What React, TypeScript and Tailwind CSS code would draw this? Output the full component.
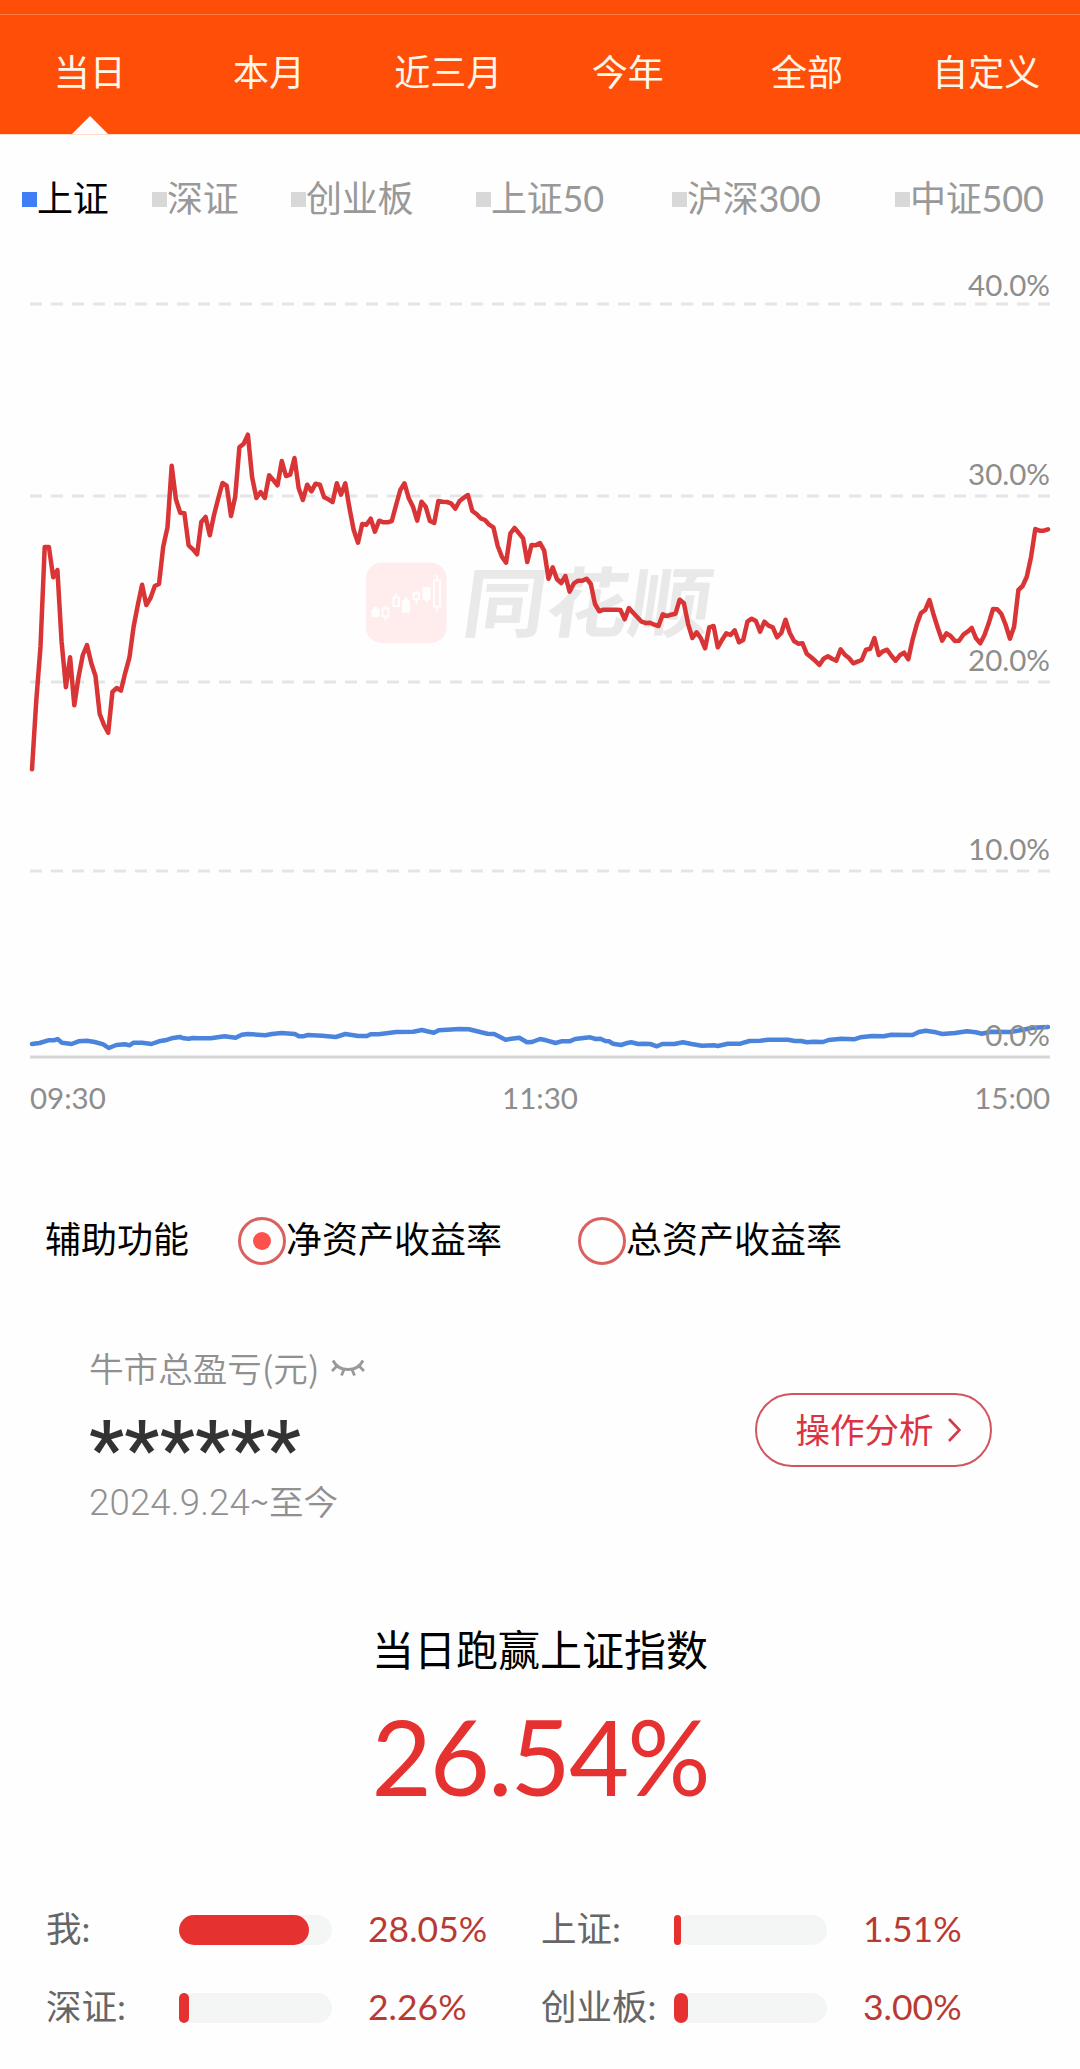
import clsx from 'clsx';

const TABS = ['当日', '本月', '近三月', '今年', '全部', '自定义'];

const INDEXES = [
  { name: '上证', width: 'w-[130px]' },
  { name: '深证', width: 'w-[139px]' },
  { name: '创业板', width: 'w-[185px]' },
  { name: '上证50', width: 'w-[196px]' },
  { name: '沪深300', width: 'w-[223px]' },
  { name: '中证500', width: 'w-[160px]' },
];

const GRID = [
  { label: '40.0%', y: 304, textY: 296 },
  { label: '30.0%', y: 496, textY: 485 },
  { label: '20.0%', y: 682, textY: 671 },
  { label: '10.0%', y: 871, textY: 860 },
];

// one value per trading minute
const MINE = [
  769.3, 701.7, 646.7, 547, 547, 577.3, 570, 641.7, 687.3, 657.3, 705.3, 676.7, 655, 645, 663.3, 676, 714, 725, 732.7,
  692, 688, 690.7, 673.3, 657.7, 626.7, 605, 584.7, 605, 598, 586, 584, 546.7, 527.3, 465.7, 499.3, 512.7, 513.3, 545.3,
  549.3, 554.3, 522, 517, 535.3, 515, 498.3, 483, 485.7, 516, 496.7, 447.3, 443.7, 434.7, 477.3, 498, 492, 498, 475.3,
  480, 485.3, 461, 476, 474.7, 458, 488.3, 500, 484.7, 491.3, 483.7, 484.7, 497.3, 499.3, 502, 483.3, 494.7, 483.3,
  508.3, 530, 542.7, 524, 524.7, 518.7, 531.7, 520.7, 522.3, 522.3, 521, 505, 490, 483.3, 498.3, 506.7, 520.7, 501.7,
  506.7, 521, 523, 501, 501.7, 502, 503.3, 508.7, 501, 497.7, 495, 511, 514, 518.3, 520, 524.7, 527.3, 546, 556.7,
  562.7, 533.3, 528, 533, 538.3, 562, 545, 545.3, 543, 550.7, 578.7, 567.3, 579, 583, 576, 591.7, 583.3, 580.7, 580.7,
  578.7, 584, 604, 611.3, 609.7, 609.7, 609.7, 609.7, 610, 619.3, 608, 612.7, 617.3, 621.7, 623, 622.7, 624.7, 626,
  614.3, 616, 614.7, 613.7, 599.7, 603.3, 624.3, 638, 632.3, 638.3, 648.3, 627.3, 626, 647.3, 640, 633.3, 635, 630.3,
  642.3, 640, 621.7, 618.7, 621, 631.7, 621.7, 625.7, 627.3, 637.3, 633, 619.7, 633, 641, 643.7, 643.3, 653.7, 657,
  660.7, 665, 658.7, 656.3, 658.7, 660.7, 649.3, 654.7, 658, 663.3, 661.7, 660, 649.7, 648.7, 638, 655, 651.3, 649.7,
  655.7, 660.7, 655.3, 652.7, 659.3, 640, 624.3, 613, 610, 600, 615, 628.3, 640.7, 633.3, 636, 641, 640.7, 634.7,
  631.7, 628, 638.3, 643.3, 635, 623.3, 609, 609.3, 614, 625, 638.7, 626.7, 590, 586, 576.7, 556.7, 529, 530.7, 530.7,
  529.3,
];

const SHANGHAI =
  '32,1044 39.6,1043 48.2,1040.3 54,1040.3 57.5,1039 62,1042.7 71.6,1044 78.5,1041.3 86.8,1040.7 94.7,1042 103.3,1044.3 ' +
  '108.8,1048 116.4,1045 124.7,1044.3 129.5,1045.3 133.6,1042.7 141.9,1042.7 151.5,1044 159,1041.3 165.3,1040.3 ' +
  '171.5,1038.3 179.8,1037 183.9,1038.3 188.7,1038.7 192.9,1038 199.7,1038.3 210.8,1038.3 224.5,1036.3 235.6,1037.7 ' +
  '241.8,1034.7 248,1034 265.2,1035.3 272,1034 281.4,1033 294.8,1034 299,1036.3 303,1036.3 307.9,1035 322,1035.7 ' +
  '335.8,1037 345.4,1034 358.2,1036 367,1036 370.6,1034.3 378.8,1034.3 396,1032 413.3,1031.7 421.9,1030 427,1031.3 ' +
  '433.9,1032.7 438.7,1030.3 459.8,1029 469,1029.3 477,1031.3 487.3,1033.7 494.2,1034 505.6,1039.7 511.4,1038.7 ' +
  '519.3,1037.7 527,1042.3 532,1042 540,1039 546.2,1040.3 555.5,1043 561.4,1041.3 569.6,1041.3 575.1,1039 590,1037.3 ' +
  '595.8,1039 600.3,1038.7 605.4,1041 608.9,1041.3 613,1043.7 621,1045 626,1043.3 631.3,1042.3 638.2,1044 643.3,1043.7 ' +
  '650.2,1044 657,1046.3 662.3,1044 674.3,1044 683,1042.3 691.5,1044 701.9,1045.7 714,1045.3 717.7,1046 727.7,1043.7 ' +
  '740.4,1043.7 749.4,1041 760.4,1040.7 768,1039.7 788,1039.7 794.8,1041 801,1041 806.9,1042.3 813.8,1041.7 823,1042 ' +
  '828.6,1040 841.3,1038.7 854,1039.3 860.3,1037.3 872.3,1036 883.7,1036.3 891.3,1034.7 912.6,1035 918.8,1032 ' +
  '925.7,1030.7 936,1032.3 942.2,1034 955,1033 967,1031.3 975.7,1032.3 981.8,1033.7 991,1031.7 1010,1032 1022,1030 ' +
  '1032.5,1027.7 1048,1027';

const COMPARE = [
  { name: '我:', value: '28.05%', bar: 130 },
  { name: '上证:', value: '1.51%', bar: 7 },
  { name: '深证:', value: '2.26%', bar: 10 },
  { name: '创业板:', value: '3.00%', bar: 14 },
];

function Watermark() {
  return (
    <g>
      <rect x="366" y="562.5" width="80.5" height="80.5" rx="16" fill="#ffecec" />
      <path
        fill="#fefefe"
        d="M371.5 609h2.5v-2h3v2h2.5v8h-8zM402 600h2.500v-2.500h3v2.500h2.500v12.500h-8zM422.500 587h8v13h-2.500v1.500h-3v-1.500h-2.500z"
      />
      <path
        fill="none"
        stroke="#fefefe"
        strokeWidth="2"
        d="M382.500 608.500h6v8h-6zM385.500 606v2.500M385.500 616.500v4M393.500 597.500h5.500v8.500h-5.500zM396 593.500v4M413.500 593.500h5.500v5.500h-5.500zM416.500 591.500v2M416.500 599v5M434 580.500h6v26h-6zM437 575v5M437 607v4.500"
      />
      <text
        transform="translate(460 631) skewX(-8) scale(1.09 1)"
        className="text-[76px] font-bold"
        fill="#e9e9e9"
      >
        同花顺
      </text>
    </g>
  );
}

function YieldChart() {
  const step = 1016 / (MINE.length - 1);
  const mine = MINE.map((y, i) => `${(32 + i * step).toFixed(1)},${y}`).join(' ');

  return (
    <svg viewBox="0 264 1080 864" className="block h-[864px] w-[1080px]">
      {GRID.map((g) => (
        <path key={g.label} d={`M30 ${g.y}H1050`} stroke="#e5e5e5" strokeWidth="2.8" strokeDasharray="12 9" />
      ))}
      <path d="M30 1057H1050" stroke="#d5d5d5" strokeWidth="3.2" />
      <Watermark />
      <g fill="none" strokeLinecap="round" strokeLinejoin="round">
        <polyline points={SHANGHAI} stroke="#4a84dd" strokeWidth="4.5" />
        <polyline points={mine} stroke="#d93536" strokeWidth="4.5" />
      </g>
      <g fill="#8d8d8d" className="text-[29.500px]">
        {GRID.map((g) => (
          <text key={g.label} x="1050" y={g.textY} textAnchor="end">
            {g.label}
          </text>
        ))}
        <text x="1050" y="1046" textAnchor="end">0.0%</text>
        <text x="30" y="1109">09:30</text>
        <text x="540" y="1109" textAnchor="middle">11:30</text>
        <text x="1050" y="1109" textAnchor="end">15:00</text>
      </g>
    </svg>
  );
}

function Radio({ label, checked }: { label: string; checked?: boolean }) {
  return (
    <div className="flex w-[340px] items-center">
      <span className="flex size-12 items-center justify-center rounded-full border-[3px] border-[#db6060]">
        {checked && <span className="size-[18px] rounded-full bg-[#fd514e]" />}
      </span>
      <span className="pb-1">{label}</span>
    </div>
  );
}

export default function App() {
  return (
    <div className="h-[2069px] w-[1080px] overflow-hidden bg-[#fefefe] font-[Lato,'Noto_Sans_CJK_SC',sans-serif] text-[36px] leading-[52px] text-black">
      {/* Period tabs */}
      <header className="h-[134px] bg-[#ff4e08] pt-[14px]">
        <div className="h-px bg-[#ff7a45]" />
        <nav className="grid h-[119px] w-[1076px] grid-cols-6">
          {TABS.map((tab, i) => (
            <div key={tab} className="flex flex-col items-center justify-between pt-[31px] text-[#fff6ea]">
              {tab}
              {i === 0 && (
                <svg viewBox="0 0 36 18" className="h-[18px] w-9">
                  <path d="M18 0L36 18H0z" fill="#fefefe" />
                </svg>
              )}
            </div>
          ))}
        </nav>
      </header>
      <div className="h-px bg-[#ffdccb]" />

      {/* Index legend */}
      <div className="flex h-[129px] items-start pt-[37px] pl-[22px] tracking-[-0.200px]">
        {INDEXES.map((item, i) => (
          <div
            key={item.name}
            className={clsx('flex shrink-0 items-center whitespace-nowrap', item.width, i > 0 && 'text-[#999]')}
          >
            <span className={clsx('mt-[2px] size-[15px]', i === 0 ? 'bg-[#3f7ef6]' : 'bg-[#d8d8d8]')} />
            <span>{item.name}</span>
          </div>
        ))}
      </div>

      <YieldChart />

      {/* Yield mode */}
      <div className="mt-[87px] flex h-[52px] items-center pl-[45px]">
        <span className="w-[193px] pb-1">辅助功能</span>
        <Radio label="净资产收益率" checked />
        <Radio label="总资产收益率" />
      </div>

      {/* Bull market profit */}
      <div className="mt-[75px] flex h-[185px] items-center justify-between pr-[88px] pl-[89px]">
        <div className="text-[34.600px] font-[350] text-[#909090]">
          <div className="flex h-[52px] items-center gap-[12px]">
            <span className="pb-[3px] font-['Noto_Sans_CJK_SC']">牛市总盈亏(元)</span>
            <svg viewBox="0 0 34 18" className="h-[18px] w-[34px]" fill="none" stroke="#999" strokeWidth="2.800">
              <path d="M2 1.500C8 13.500 26 13.500 32 1.500M6 7L1 12M13 10.500L10.500 16.500M21 10.500L23.500 16.500M28 7L33 12" />
            </svg>
          </div>
          <div className="mt-[14px] h-[66px] font-[Roboto] text-[79px] leading-[84px] font-medium tracking-[0.300px] text-[#333]">
            ******
          </div>
          <div className="h-[53px]">
            <span className="font-[Roboto] text-[36.500px] font-light tracking-[0.200px]">2024.9.24</span>
            <span className="font-['Noto_Sans_CJK_SC']">~至今</span>
          </div>
        </div>
        <button className="mb-[10px] flex h-[74px] w-[237px] items-center justify-center gap-[14px] rounded-full border-2 border-[#cf5660] pl-[9px] text-[34.500px] text-[#db3341]">
          操作分析
          <svg viewBox="0 0 13 24" className="h-6 w-[13px]" fill="none" stroke="#d23a46" strokeWidth="2.600">
            <path d="M1 1L11.500 12L1 23" />
          </svg>
        </button>
      </div>

      <div className="mt-[93px] text-center">
        <div className="h-[60px] text-[42px] leading-[60px]">当日跑赢上证指数</div>
        <div className="h-[152px] text-[104px] leading-[152px] tracking-[-2px] text-[#e63131]">26.54%</div>
      </div>

      {/* Index comparison */}
      <div className="mt-[72px] grid grid-cols-[495px_1fr] gap-y-[26px] pl-[46px]">
        {COMPARE.map((row) => (
          <div key={row.name} className="flex items-center">
            <span className="w-[133px] pb-[2px] whitespace-nowrap text-[35.500px] leading-[50px] text-[#666]">
              {row.name}
            </span>
            <span className="h-[30px] w-[153px] rounded-full bg-[#f4f6f6]">
              <span className="block h-full rounded-full bg-[#e63131]" style={{ width: row.bar }} />
            </span>
            <span className="ml-[36px] pb-[2px] text-[35.500px] leading-[50px] text-[#b93a33]">{row.value}</span>
          </div>
        ))}
      </div>
    </div>
  );
}
